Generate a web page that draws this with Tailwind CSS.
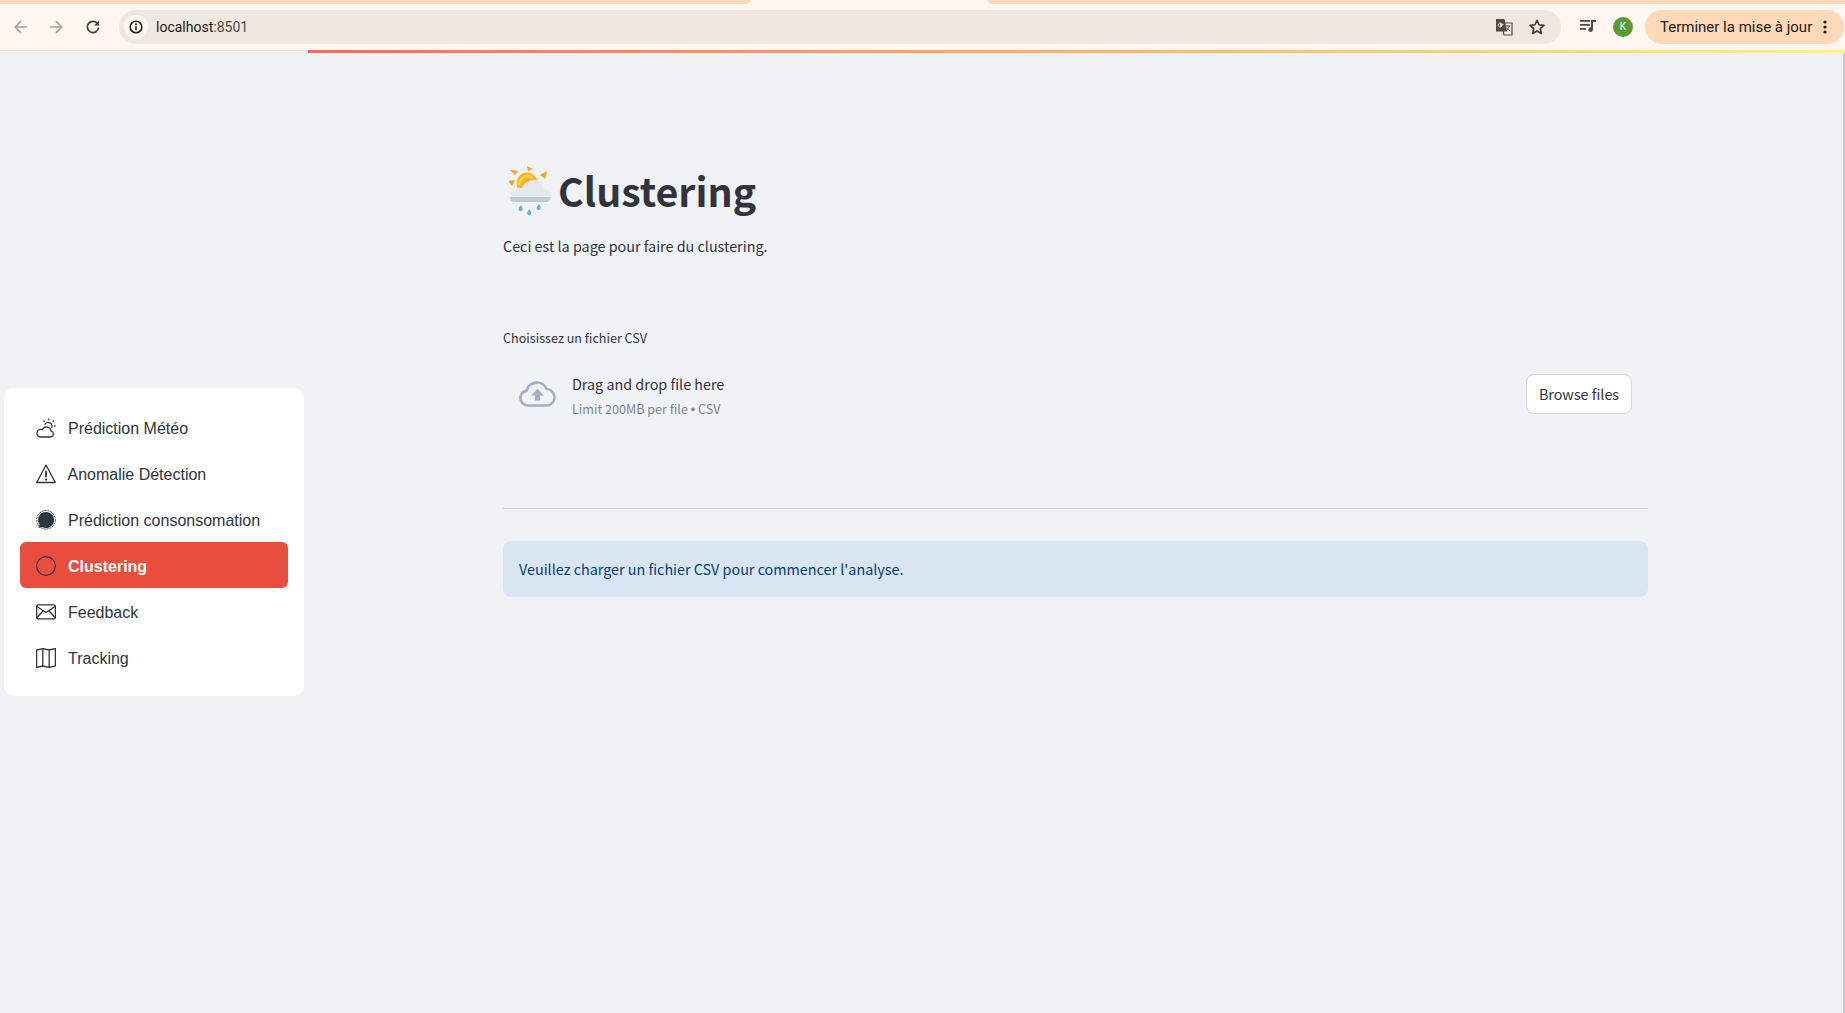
<!DOCTYPE html>
<html lang="fr">
<head>
<meta charset="utf-8">
<title>Clustering</title>
<script src="https://cdn.jsdelivr.net/npm/@tailwindcss/browser@4"></script>
</head>
<body class="relative h-[1013px] w-[1845px] overflow-hidden bg-[#f0f2f6] font-['Noto_Sans_CJK_SC','Noto_Sans',sans-serif] text-[#31333f]">

<!-- browser chrome -->
<header class="relative h-[51px] border-b border-[#fbdcc4] bg-[#fff6f2] font-['Roboto',sans-serif]">
  <div class="flex h-1 justify-between">
    <div class="h-1 w-[750px] rounded-br-[6px] bg-[#ffd9b8]"></div>
    <div class="h-1 w-[857px] rounded-bl-[6px] bg-[#ffd9b8]"></div>
  </div>
  <div class="flex h-[46px] items-start pt-[6px]">
    <div class="flex h-[34px] w-[119px] items-center">
      <svg class="ml-[13px]" width="16" height="16" viewBox="0 0 16 16" fill="none" stroke="#a8a4a0" stroke-width="1.7"><path d="M14 8H2.5M8 2.2 2.3 8 8 13.8"/></svg>
      <svg class="ml-[19px]" width="16" height="16" viewBox="0 0 16 16" fill="none" stroke="#a8a4a0" stroke-width="1.7"><path d="M2 8h11.5M8 2.2 13.7 8 8 13.8"/></svg>
      <svg class="ml-[21px]" width="16" height="16" viewBox="0 0 16 16" fill="none" stroke="#463d35" stroke-width="1.7"><path d="M13.5 8.5A5.6 5.6 0 1 1 12 4.1L13.6 5.8"/><path d="M14 1.5v5H9z" fill="#463d35" stroke="none"/></svg>
    </div>
    <div class="flex h-[34px] w-[1442px] items-center rounded-full bg-[#f0e7e1] pl-[5px] pr-[15px]">
      <div class="flex h-6 w-6 items-center justify-center rounded-full bg-[#fff6f2]">
        <svg width="14" height="14" viewBox="0 0 14 14" fill="none"><circle cx="7" cy="7" r="5.8" stroke="#201a14" stroke-width="1.5"/><path d="M7 6.2v4" stroke="#201a14" stroke-width="1.6"/><circle cx="7" cy="4.2" r="1" fill="#201a14"/></svg>
      </div>
      <span class="ml-[8px] text-[14px] leading-none text-[#201a14]">localhost<span class="text-[#52493f]">:8501</span></span>
      <div class="ml-auto flex items-center gap-[15px]">
        <svg width="18" height="18" viewBox="0 0 18 18"><path d="M7 5h10v12H9z" fill="#fff6f2" stroke="#52493f" stroke-width="1.2"/><path d="M1 1h8.400l2.800 12.500H1z" fill="#52493f"/><path d="M8.500 6.300H5.400v1.200h1.800a2 2 0 1 1-.6-2" fill="none" stroke="#fff6f2" stroke-width="1"/><path d="M11 8h4.400M13 7v1m1.300 0c-.4 2-1.600 3.600-3 4.800M12 9.500c.6 1.300 1.800 2.600 3.200 3.500" fill="none" stroke="#52493f" stroke-width="1"/></svg>
        <svg width="18" height="18" viewBox="0 0 18 18" fill="none" stroke="#463d35" stroke-width="1.7" stroke-linejoin="round"><path d="m9 2.300 2.050 4.450 4.850.55-3.600 3.300 1 4.800L9 13l-4.300 2.400 1-4.800-3.600-3.300 4.850-.55z"/></svg>
      </div>
    </div>
    <svg class="ml-[19px] mt-[9px]" width="16" height="14" viewBox="0 0 16 14" fill="#52493f"><path d="M0 1h10v1.700H0zM0 5h10v1.700H0zM0 9h6v1.700H0z"/><path d="M11 1h5v2h-3v7.500a2.300 2.300 0 1 1-2-2.200z"/></svg>
    <div class="ml-[17px] mt-[7px] flex h-5 w-5 items-center justify-center rounded-full bg-[#5c9a32] text-[10px] leading-none text-white">K</div>
    <div class="ml-[12px] flex h-[34px] w-[199px] items-center rounded-full bg-[#ffd9b8] pl-[15px] text-[15px] text-[#201a14]">
      <span>Terminer la mise à jour</span>
      <svg class="ml-[11px]" width="4" height="14" viewBox="0 0 4 14" fill="#201a14"><circle cx="2" cy="2" r="1.600"/><circle cx="2" cy="7" r="1.600"/><circle cx="2" cy="12" r="1.600"/></svg>
    </div>
  </div>
</header>

<!-- streamlit decoration line -->
<div class="absolute left-[308px] top-[50px] h-[3px] w-[1537px] bg-gradient-to-r from-[#ff6a58] to-[#fff27e]"></div>
<!-- scrollbar edge -->
<div class="absolute right-0 top-[53px] h-[960px] w-[2px] bg-[#c9cacd]"></div>

<div class="flex">
  <!-- sidebar -->
  <aside class="w-[308px] shrink-0 pl-1 pt-[337px] font-['Liberation_Sans',sans-serif] text-[16px] text-[#31333f]">
    <nav class="flex w-[300px] flex-col rounded-[10px] bg-white p-4">
      <a class="flex h-[46px] items-center rounded-[6px] pl-4 pr-2">
        <svg class="mt-[1px] shrink-0" width="20" height="20" viewBox="0 0 20 20" fill="none" stroke="#31333f" stroke-width="1.300"><path d="M3.500 19h11a3 3 0 0 0 .6-5.900 4.600 4.600 0 0 0-8.700-1.500 3.700 3.700 0 0 0-2.900 7.400z" /><path d="M8.800 6.600a3.800 3.800 0 0 1 6.900 3.300M12.800 .5v2M18 2.500l-1.300 1.400M19.800 7.900h-1.800M7.500 2.500l1 1.300"/></svg>
        <span class="ml-3 pt-[4px]">Prédiction Météo</span>
      </a>
      <a class="flex h-[46px] items-center rounded-[6px] pl-4 pr-2">
        <svg class="mt-[1px] shrink-0" width="20" height="20" viewBox="0 0 20 20" fill="none" stroke="#31333f" stroke-width="1.300"><path d="M10 1 19.300 18.500H.7z" stroke-linejoin="round"/><path d="M10 6.800v6.400" stroke-width="1.800"/><circle cx="10" cy="15.600" r="1.100" fill="#31333f" stroke="none"/></svg>
        <span class="ml-[11.500px] pt-[4px]">Anomalie Détection</span>
      </a>
      <a class="flex h-[46px] items-center rounded-[6px] pl-4 pr-2">
        <svg class="mt-[1px] shrink-0" width="20" height="20" viewBox="0 0 20 20"><circle cx="10" cy="9.800" r="9.300" fill="none" stroke="#31333f" stroke-width="1" stroke-dasharray="2 1"/><path d="M10 2a8 8 0 1 1-4 14.900L2.500 18l1-3.400A8 8 0 0 1 10 2z" fill="#31333f"/></svg>
        <span class="ml-3 pt-[4px]">Prédiction consonsomation</span>
      </a>
      <a class="flex h-[46px] items-center rounded-[6px] bg-[#e94d3e] pl-4 pr-2 font-bold text-white">
        <svg class="mt-[1px] shrink-0" width="20" height="20" viewBox="0 0 20 20" fill="none" stroke="#31333f" stroke-width="1.200"><circle cx="10" cy="10" r="9.400"/></svg>
        <span class="ml-3 pt-[4px]">Clustering</span>
      </a>
      <a class="flex h-[46px] items-center rounded-[6px] pl-4 pr-2">
        <svg class="mt-[1px] shrink-0" width="20" height="20" viewBox="0 0 20 20" fill="none" stroke="#31333f" stroke-width="1.300"><rect x=".6" y="2.800" width="18.800" height="14" rx="1.500"/><path d="m1 4.500 9 6 9-6M1 15.500l6.200-6.700M19 15.500l-6.200-6.700"/></svg>
        <span class="ml-3 pt-[4px]">Feedback</span>
      </a>
      <a class="flex h-[46px] items-center rounded-[6px] pl-4 pr-2">
        <svg class="mt-[1px] shrink-0" width="20" height="20" viewBox="0 0 20 20" fill="none" stroke="#31333f" stroke-width="1.300"><path d="M.6 2 6.800.6l6.400 1.400L19.400.6v17.400l-6.200 1.400-6.400-1.400-6.200 1.400zM6.800.6v17.400M13.200 2v17.400"/></svg>
        <span class="ml-3 pt-[4px]">Tracking</span>
      </a>
    </nav>
  </aside>

  <!-- main -->
  <main class="ml-[195px] w-[1145px] pt-[104px]">
    <h1 class="flex h-[70px] items-center text-[39.300px] font-bold leading-none tracking-normal text-[#31333f]">
      <svg class="ml-[6px] mr-[7px] mt-[3px] shrink-0" width="42" height="52" viewBox="0 0 42 52">
        <g fill="#f9a11f"><path d="M6 9 1 4l8 1zM19 5 18 0l6 3zM31 9l7-4-2 8zM3 20l-4-5 7-1z"/></g>
        <circle cx="18" cy="17" r="10.500" fill="#fbb41e"/>
        <path d="M10 19a8.500 8.500 0 0 1 8-9c3 0 5 1 6 3" fill="none" stroke="#ffd24f" stroke-width="2.500"/>
        <path d="M7 36a5.500 5.500 0 0 1-1-11c1-3 4-4 7-3 1-4 6-8 12-8 6 0 9 4 10 9 4 .5 7 3 7 6.500 0 3-2 6.500-5 6.500z" fill="#e3e9ec"/>
        <path d="M1 31h40.500c0 3-2 5-5 5H6c-3 0-5-2-5-5z" fill="#bccbd0"/>
        <g fill="#5ab4ee"><path d="M12 39c1.500 2.500 2 3.500 1.500 5s-3 1.500-3.700 0S10.500 40.500 12 39zM30 38c1.500 2.500 2 3.500 1.500 5s-3 1.500-3.700 0S28.500 39.500 30 38zM20.500 43c1.500 2.500 2 3.500 1.500 5s-3 1.500-3.700 0S19 44.500 20.500 43z"/></g>
      </svg>
      <span>Clustering</span>
    </h1>
    <p class="mt-[9px] h-6 text-[14.350px] leading-6">Ceci est la page pour faire du clustering.</p>
    <label class="mt-[70px] block h-5 text-[12.600px] leading-5">Choisissez un fichier CSV</label>
    <section class="mt-[10px] flex h-[72px] items-center pl-4 pr-4">
      <svg class="shrink-0" width="37" height="26" viewBox="0 0 37 26" fill="none"><path d="M9 24.500a7.500 7.500 0 0 1-1.300-14.900A10.500 10.500 0 0 1 27.600 8 8.300 8.300 0 0 1 28.500 24.500z" stroke="#a3afc6" stroke-width="2.600"/><path d="M18.500 8 25 14.500h-4v5h-5v-5h-4z" fill="#a3afc6"/></svg>
      <div class="ml-4 mt-[3px]">
        <div class="text-[14.350px] leading-6 text-[#31333f]">Drag and drop file here</div>
        <div class="mt-[3px] text-[12.600px] leading-5 text-[#808495]">Limit 200MB per file <span class="font-['Liberation_Sans']">•</span> CSV</div>
      </div>
      <button class="ml-auto h-10 w-[106px] rounded-lg border border-[#d5d6d9] bg-white text-[14.350px] text-[#31333f]">Browse files</button>
    </section>
    <hr class="mt-[78px] border-t border-[#cfd0d4]">
    <div class="mt-8 flex h-14 items-center rounded-lg bg-[#dae5f3] pl-4 text-[14.350px] text-[#004280]">Veuillez charger un fichier CSV pour commencer l'analyse.</div>
  </main>
</div>
</body>
</html>
